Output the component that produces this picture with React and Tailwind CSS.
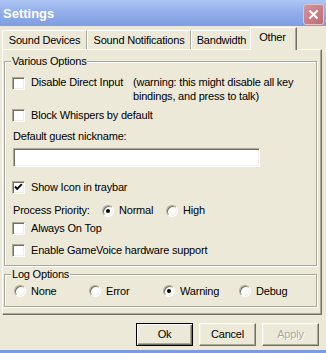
import React from "react";

function Check({ checked }) {
  return (
    <div className="w-[13px] h-[13px] shrink-0 bg-white border border-t-[#aca899] border-l-[#aca899] border-r-white border-b-white shadow-[inset_1px_1px_0_#716f64,inset_-1px_-1px_0_#f1efe2] flex items-center justify-center">
      {checked && (
        <svg width="11" height="11" viewBox="0 0 11 11">
          <path d="M2 4.5 L4.2 6.8 L8.8 2.2" fill="none" stroke="#000" strokeWidth="1.9" />
        </svg>
      )}
    </div>
  );
}

function Radio({ checked }) {
  return (
    <div className="w-[12px] h-[12px] shrink-0 rounded-full bg-white border border-t-[#aca899] border-l-[#aca899] border-r-white border-b-white shadow-[inset_1px_1px_0_#716f64,inset_-1px_-1px_0_#f1efe2] flex items-center justify-center">
      {checked && <div className="w-[4px] h-[4px] rounded-full bg-black" />}
    </div>
  );
}

function CheckRow({ checked, label, className = "" }) {
  return (
    <div className={"flex items-center h-[13px] " + className}>
      <Check checked={checked} />
      <span className="ml-[6px] whitespace-nowrap">{label}</span>
    </div>
  );
}

function RadioItem({ checked, label, w }) {
  return (
    <div className={"flex items-center h-[12px] " + w}>
      <Radio checked={checked} />
      <span className="ml-[5px] whitespace-nowrap">{label}</span>
    </div>
  );
}

function Button({ children, def, disabled }) {
  if (def) {
    return (
      <div className="w-[57px] h-[23px] border border-black shadow-[inset_1px_1px_0_#fff,inset_-1px_-1px_0_#716f64,inset_-2px_-2px_0_#aca899] flex items-center justify-center">
        {children}
      </div>
    );
  }
  return (
    <div className="w-[57px] h-[23px] border border-t-white border-l-white border-r-[#716f64] border-b-[#716f64] shadow-[inset_-1px_-1px_0_#aca899,inset_1px_1px_0_#f1efe2] flex items-center justify-center">
      <span className={disabled ? "text-[#aca899] [text-shadow:1px_1px_0_#fff]" : ""}>{children}</span>
    </div>
  );
}

function Tab({ children, w }) {
  return (
    <div className={"h-[19px] flex items-center justify-center border-t border-l border-t-white border-l-white border-r border-r-[#aca899] shadow-[1px_0_0_#e0ddd0] " + w}>
      <span className="whitespace-nowrap pt-[1px]">{children}</span>
    </div>
  );
}

export default function App() {
  return (
    <div className="w-[326px] h-[353px] bg-[#ece9d8] flex flex-col overflow-hidden text-[11px] leading-[13px] tracking-[-0.2px] text-black font-['Liberation_Sans',Arial,sans-serif]">
      {/* Title bar */}
      <div className="h-[26px] shrink-0 flex items-center justify-between pl-[3px] pr-[2px] bg-linear-to-b from-[#adc5f3] via-[#91ade9] to-[#7f9de2]">
        <span className="text-white font-bold text-[13px] leading-[16px] mt-[1px] tracking-normal">Settings</span>
        <div className="w-[21px] h-[21px] rounded-[3px] border border-[#e7c0c3] bg-linear-to-br from-[#d6959a] to-[#bd6b72] flex items-center justify-center mt-[2px]">
          <svg width="11" height="11" viewBox="0 0 11 11">
            <path d="M1.5 1.5 L9.5 9.5 M9.5 1.5 L1.5 9.5" stroke="#fff" strokeWidth="2" />
          </svg>
        </div>
      </div>

      {/* Tabs */}
      <div className="h-[23px] shrink-0 flex items-end pl-[2px]">
        <Tab w="w-[85px]">Sound Devices</Tab>
        <Tab w="w-[104px]">Sound Notifications</Tab>
        <Tab w="w-[61px]">Bandwidth</Tab>
        <div className="relative z-10 -ml-[2px] -mb-[1px] w-[47px] h-[23px] bg-[#ece9d8] border-t border-l border-t-white border-l-white border-r border-r-[#716f64] shadow-[inset_-1px_0_0_#aca899] flex items-start justify-center">
          <span className="pt-[3px] pr-[2px]">Other</span>
        </div>
      </div>

      {/* Panel */}
      <div className="ml-[2px] w-[320px] h-[266px] shrink-0 border border-t-white border-l-white border-r-[#716f64] border-b-[#716f64] shadow-[inset_-1px_-1px_0_#aca899] pt-[5px] pl-[1px]">
        <fieldset className="w-[313px] border border-[#aca899] shadow-[inset_1px_1px_0_#fff,1px_1px_0_#fff] px-0">
          <legend className="ml-[6px] px-[1px] bg-[#ece9d8] leading-[13px]">Various Options</legend>
          <div className="pl-[7px] pt-[7px] pb-[8px]">
            <div className="flex items-start">
              <div className="mt-[2px]">
                <Check />
              </div>
              <span className="ml-[6px] w-[102px] leading-[14px] whitespace-nowrap">Disable Direct Input</span>
              <span className="leading-[14px] whitespace-nowrap">
                (warning: this might disable all key
                <br />
                bindings, and press to talk)
              </span>
            </div>
            <CheckRow className="mt-[6px]" label="Block Whispers by default" />
            <div className="mt-[8px] ml-[1px]">Default guest nickname:</div>
            <div className="mt-[5px] ml-[1px] w-[247px] h-[19px] bg-white border border-t-[#aca899] border-l-[#aca899] border-r-white border-b-white shadow-[inset_1px_1px_0_#716f64,inset_-1px_-1px_0_#f1efe2]" />
            <CheckRow className="mt-[14px]" checked label="Show Icon in traybar" />
            <div className="mt-[10px] h-[13px] flex items-center">
              <span className="ml-[1px] w-[89px] whitespace-nowrap">Process Priority:</span>
              <RadioItem checked label="Normal" w="w-[64px]" />
              <RadioItem label="High" w="w-[60px]" />
            </div>
            <CheckRow className="mt-[5px]" label="Always On Top" />
            <CheckRow className="mt-[9px]" label="Enable GameVoice hardware support" />
          </div>
        </fieldset>

        <fieldset className="mt-[2px] w-[313px] border border-[#aca899] shadow-[inset_1px_1px_0_#fff,1px_1px_0_#fff] px-0">
          <legend className="ml-[6px] px-[1px] bg-[#ece9d8] leading-[13px]">Log Options</legend>
          <div className="pl-[9px] pt-[4px] pb-[9px] flex items-center">
            <RadioItem label="None" w="w-[75px]" />
            <RadioItem label="Error" w="w-[74px]" />
            <RadioItem checked label="Warning" w="w-[76px]" />
            <RadioItem label="Debug" w="w-[70px]" />
          </div>
        </fieldset>
      </div>

      {/* Buttons */}
      <div className="mt-[8px] flex justify-end gap-[6px] pr-[7px]">
        <Button def>Ok</Button>
        <Button>Cancel</Button>
        <Button disabled>Apply</Button>
      </div>

      <div className="mt-auto h-[3px] shrink-0 bg-[#7d9be1]" />
    </div>
  );
}
